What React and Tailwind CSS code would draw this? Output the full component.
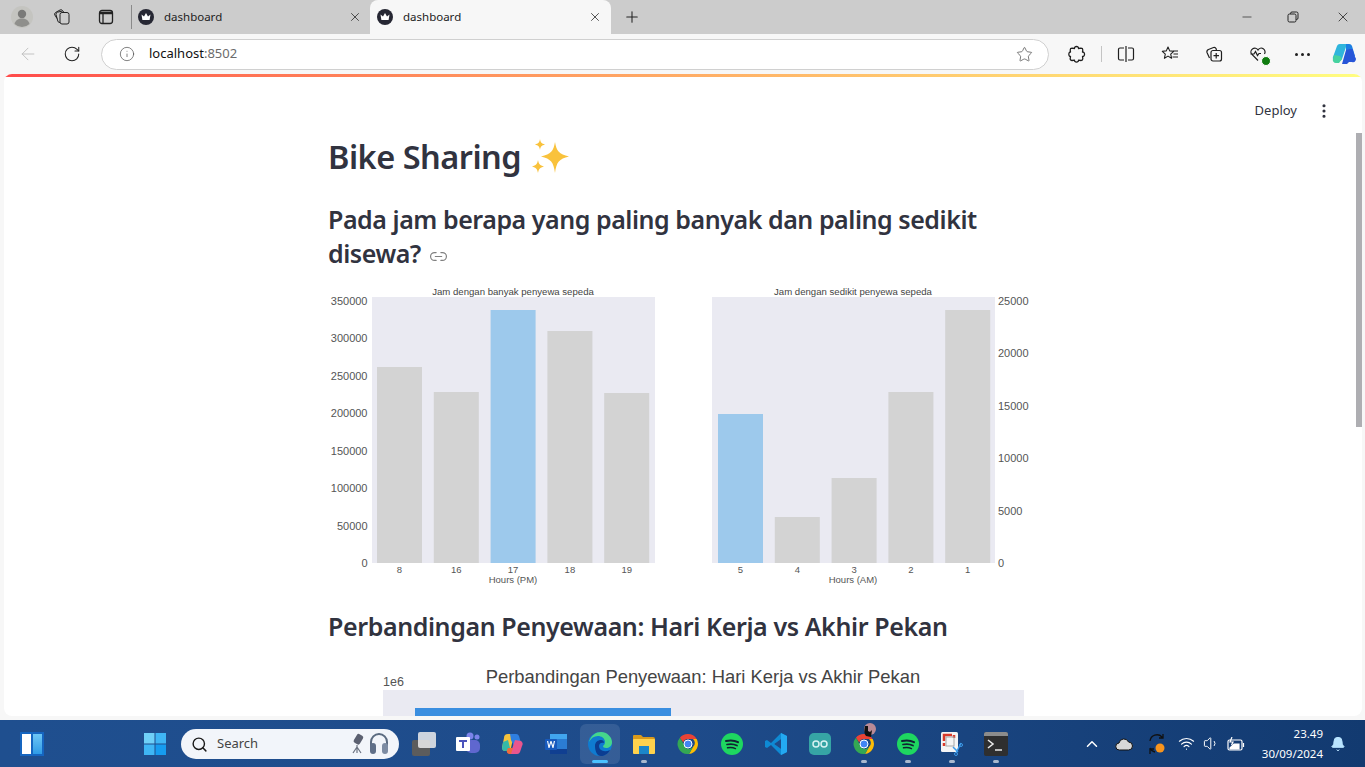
import React from 'react';
import { ArrowLeft, RotateCw, Info, Star, Plus, X, Minus, Link2, EllipsisVertical, Search, ChevronUp, Wifi, Volume1, Bell } from 'lucide-react';

const SANS = { fontFamily: '"Noto Sans", sans-serif' };

const CrownFavicon = () => (
    <svg width="16" height="16" viewBox="0 0 16 16">
        <circle cx="8" cy="8" r="8" fill="#262733" />
        <path d="M3.500 5.500l2.500 2L8 4l2 3.500 2.500-2-.9 5.500H4.400z" fill="#fff" />
    </svg>
);

const Tab = ({ active }) => (
    <div className={`h-[34px] flex items-center ${active ? 'w-[241px] bg-[#f7f7f7] rounded-t-lg pl-[7px] pr-[9px]' : 'w-[238px] pl-[6px] pr-[8px]'}`}>
        <CrownFavicon />
        <span className="ml-[10px] flex-1 text-[11.5px] text-[#222]" style={SANS}>dashboard</span>
        <X size={14} strokeWidth={1.3} className="text-[#222]" />
    </div>
);

const ToolIcon = ({ children, w = 'w-[44px]' }) => (
    <div className={`${w} shrink-0 flex justify-center items-center text-[#1f1f1f]`}>{children}</div>
);

const TopBars = () => (
    <>
        <div className="h-[34px] bg-[#cccccc] flex items-center shrink-0">
            <div className="w-[44px] flex justify-center">
                <svg width="22" height="22" viewBox="0 0 22 22">
                    <circle cx="11" cy="11" r="11" fill="#c4c4c0" />
                    <circle cx="11" cy="8" r="4.200" fill="#7a7a78" />
                    <path d="M3.500 18c1-4 4-5.500 7.500-5.500s6.500 1.500 7.500 5.500a11 11 0 0 1-15 0z" fill="#8f8f8c" />
                </svg>
            </div>
            <div className="w-[36px] flex justify-center">
                <svg width="18" height="18" viewBox="0 0 18 18" fill="none" stroke="#222" strokeWidth="1">
                    <rect x="7" y="4.500" width="9" height="11.500" rx="2" />
                    <path d="M7 14.500A2 2 0 0 1 4.800 13L3 6.500A2 2 0 0 1 4.500 4.200L9.500 3" />
                    <path d="M4 10.500L1.800 7A2 2 0 0 1 2.500 4.500L7 2a2 2 0 0 1 2.500.5L11 4.500" />
                </svg>
            </div>
            <div className="w-[51px] flex justify-center">
                <svg width="16" height="16" viewBox="0 0 16 16" fill="none" stroke="#222" strokeWidth="1.300">
                    <rect x="1.500" y="1.500" width="13" height="13" rx="2.500" />
                    <path d="M1.500 4h13" strokeWidth="2.500" />
                    <path d="M5 4.500v10" />
                </svg>
            </div>
            <div className="w-px h-[24px] bg-[#8a8a8a]" />
            <Tab />
            <Tab active />
            <Plus size={18} strokeWidth={1.4} className="ml-[12px] text-[#222]" />
            <div className="ml-auto flex items-center text-[#222]">
                <Minus size={14} strokeWidth={1.2} className="mr-[33px]" />
                <svg width="12" height="12" viewBox="0 0 12 12" fill="none" stroke="#222" strokeWidth="1" className="mr-[36px]">
                    <rect x="1" y="3" width="8" height="8" rx="1.500" />
                    <path d="M3.500 3V2.500A1.500 1.500 0 0 1 5 1h4.500A1.500 1.500 0 0 1 11 2.500V7A1.500 1.500 0 0 1 9.500 8.500H9" />
                </svg>
                <X size={16} strokeWidth={1.2} className="mr-[14px]" />
            </div>
        </div>
        <div className="h-[40px] bg-[#f7f7f7] flex items-center shrink-0">
            <ArrowLeft size={20} strokeWidth={1.1} className="ml-[18px] text-[#bdbdbd]" />
            <RotateCw size={18} strokeWidth={1.4} className="ml-[25px] text-[#222]" />
            <div className="ml-[20px] w-[948px] shrink-0 h-[31px] rounded-full bg-white border border-[#d0d0d0] flex items-center pl-[17px] pr-[15px]">
                <Info size={16} strokeWidth={1} className="text-[#444]" />
                <span className="ml-[14px] flex-1 text-[13px] text-[#111]" style={SANS}>localhost<span className="text-[#6b6b6b]">:8502</span></span>
                <Star size={17} strokeWidth={1.1} className="text-[#555]" />
            </div>
            <div className="ml-[6px] flex items-center">
                <ToolIcon>
                    <svg width="18" height="18" viewBox="0 0 18 18" fill="none" stroke="#1f1f1f" strokeWidth="1.300" strokeLinejoin="round">
                        <path d="M6.500 3.500C6 .8 11 .8 10.500 3.500L13 3.200c1 0 1.800.8 1.800 1.800L14.500 7c2.700-.3 2.700 4.800 0 4.500l.3 2.200c0 1-.8 1.800-1.800 1.800l-2.500-.3c.5 2.500-4.500 2.500-4 0L4 15.500c-1 0-1.800-.8-1.800-1.800l.3-2.200c-2.200.2-2.200-4.700 0-4.500L2.200 5c0-1 .8-1.800 1.800-1.800z" />
                    </svg>
                </ToolIcon>
                <div className="ml-[2px] w-px h-[16px] bg-[#c4c4c4]" />
                <ToolIcon w="w-[48px]">
                    <svg width="18" height="18" viewBox="0 0 18 18" fill="none" stroke="#1f1f1f" strokeWidth="1.200">
                        <path d="M7 3H3a1.500 1.500 0 0 0-1.500 1.500v9A1.500 1.500 0 0 0 3 15h4M11 3h4a1.500 1.500 0 0 1 1.500 1.500v9A1.500 1.500 0 0 1 15 15h-4M9 1v16" />
                    </svg>
                </ToolIcon>
                <ToolIcon w="w-[40px]">
                    <svg width="18" height="18" viewBox="0 0 18 18" fill="none" stroke="#1f1f1f" strokeWidth="1.100" strokeLinejoin="round">
                        <path d="M7 2l1.700 3.900 4 .4-3 2.800.9 4.200L7 11.100l-3.600 2.200.9-4.200-3-2.800 4-.4zM12 6h5M12.500 9H17M11.500 12H17" />
                    </svg>
                </ToolIcon>
                <ToolIcon w="w-[48px]">
                    <svg width="18" height="18" viewBox="0 0 18 18" fill="none" stroke="#1f1f1f" strokeWidth="1.200">
                        <rect x="6" y="5.500" width="10.500" height="10.500" rx="2" />
                        <path d="M11.200 8v5.500M8.500 10.700H14M4.500 13L2 7.500A2.500 2.500 0 0 1 3.500 4.500L8.500 2.500a2 2 0 0 1 2.500 1L11.500 5" />
                    </svg>
                </ToolIcon>
                <ToolIcon w="w-[40px]">
                    <div className="relative w-[18px] h-[18px]">
                        <svg width="18" height="18" viewBox="0 0 18 18" fill="none" stroke="#1f1f1f" strokeWidth="1.200">
                            <path d="M9 15.500L2.500 9A3.700 3.700 0 0 1 9 5a3.700 3.700 0 0 1 6.500 4M1.500 9h3.500l1.500-2.500 2 4 1.500-2h2" />
                        </svg>
                        <div className="absolute right-[-4px] bottom-[-3px] w-[10px] h-[10px] rounded-full bg-[#107c10] border border-white" />
                    </div>
                </ToolIcon>
                <ToolIcon w="w-[48px]">
                    <div className="flex gap-[3px]">
                        <div className="w-[3px] h-[3px] rounded-full bg-[#1f1f1f]" />
                        <div className="w-[3px] h-[3px] rounded-full bg-[#1f1f1f]" />
                        <div className="w-[3px] h-[3px] rounded-full bg-[#1f1f1f]" />
                    </div>
                </ToolIcon>
                <ToolIcon w="w-[36px]">
                    <svg width="24" height="24" viewBox="0 0 24 24">
                        <path d="M8 2h7L10 17a3 3 0 0 1-3 2H4a3 3 0 0 1-3-4l4-11a3 3 0 0 1 3-2z" fill="#2fb5dc" />
                        <path d="M2 13l6 1 2 3-3 4H4a3 3 0 0 1-3-4z" fill="#46d2a0" />
                        <path d="M14 2h3a3 3 0 0 1 3 2l3 10-3 5-6-8z" fill="#1c7fe3" />
                        <path d="M18 7h2.500L23 15a3 3 0 0 1-3 5h-3l-2 2h-5l4-14z" fill="#2755d8" />
                    </svg>
                </ToolIcon>
            </div>
        </div>
    </>
);

const GREY = '#d3d3d3';
const BLUE = '#9dc9ec';
const TICK = '#555555';

const BarPanel = ({ x, inset, bars, labels, title, xlabel, highlight }) => (
    <g>
        <rect x={x} y="12" width="283" height="266" fill="#eaeaf2" />
        {bars.map((top, i) => (
            <rect key={i} x={x + inset + i * 56.800} y={top - 285} width="45" height={563 - top} fill={i === highlight ? BLUE : GREY} />
        ))}
        {labels.map((l, i) => (
            <text key={l} x={x + inset + 22.500 + i * 56.800} y="288" fontSize="9.500" fill={TICK} textAnchor="middle">{l}</text>
        ))}
        <text x={x + 141} y="10" fontSize="9.600" fill="#444" textAnchor="middle">{title}</text>
        <text x={x + 141} y="298" fontSize="9.500" fill={TICK} textAnchor="middle">{xlabel}</text>
    </g>
);

// both bar plots share one picture, viewBox x stays in page coordinates
const HourCharts = () => (
    <svg width="710" height="305" viewBox="329 0 710 305" className="block" style={{ fontFamily: '"Liberation Sans", sans-serif' }}>
        <BarPanel x={372} inset={5} bars={[367, 392, 310, 331, 393]} labels={[8, 16, 17, 18, 19]} title="Jam dengan banyak penyewa sepeda" xlabel="Hours (PM)" highlight={2} />
        <BarPanel x={712} inset={6} bars={[414, 517, 478, 392, 310]} labels={[5, 4, 3, 2, 1]} title="Jam dengan sedikit penyewa sepeda" xlabel="Hours (AM)" highlight={0} />
        {[0, 50000, 100000, 150000, 200000, 250000, 300000, 350000].map((v, i) => (
            <text key={v} x="367.500" y={282 - i * 37.500} fontSize="11" fill={TICK} textAnchor="end">{v}</text>
        ))}
        {[0, 5000, 10000, 15000, 20000, 25000].map((v, i) => (
            <text key={v} x="998" y={282 - i * 52.400} fontSize="11" fill={TICK}>{v}</text>
        ))}
    </svg>
);

const CompareChart = () => (
    <svg width="710" height="80" viewBox="329 0 710 80" className="block" style={{ fontFamily: '"Liberation Sans", sans-serif' }}>
        <text x="703" y="23" fontSize="18.400" fill="#444" textAnchor="middle">Perbandingan Penyewaan: Hari Kerja vs Akhir Pekan</text>
        <text x="383" y="26" fontSize="12.500" fill={TICK}>1e6</text>
        <rect x="383" y="30" width="641" height="50" fill="#eaeaf2" />
        <rect x="415" y="48" width="256" height="32" fill="#3a8ee0" />
    </svg>
);

const Sparkles = () => (
    <svg width="40" height="40" viewBox="0 0 40 40" className="ml-[10px]">
        <path d="M24 5c1.500 9 4 12 14 14.500C28 22 25.500 25 24 36c-1.500-11-4-14-14-16.500C20 17 22.500 14 24 5z" fill="#f9c23c" />
        <path d="M9 2c.6 3.500 1.500 4.500 5 5.500-3.500 1-4.400 2-5 5.500-.6-3.500-1.500-4.500-5-5.500 3.500-1 4.400-2 5-5.500z" fill="#f9c23c" />
        <path d="M7 23c.7 4 1.800 5.200 6 6.500-4.200 1.300-5.300 2.500-6 6.500-.7-4-1.800-5.200-6-6.500 4.200-1.300 5.300-2.500 6-6.500z" fill="#f9c23c" />
    </svg>
);

const Page = () => (
    <div className="relative flex-1 ml-[4px] mr-[3px] mb-[4px] rounded-lg bg-white overflow-hidden min-h-0">
        <div className="h-[3px] bg-gradient-to-r from-[#ff4b4b] to-[#fffd80]" />
        <div className="absolute top-[27px] right-[29px] flex items-center">
            <span className="text-[13px] text-[#31333f] mr-[18px]" style={SANS}>Deploy</span>
            <EllipsisVertical size={18} strokeWidth={2.2} className="text-[#31333f]" />
        </div>
        <div className="absolute right-0 top-[59px] w-[6px] h-[294px] bg-[#aeaeb2]" />
        <div className="pl-[324px] w-[1040px] text-[#31333f]" style={SANS}>
            <h1 className="flex items-center h-[46px] mt-[57px] text-[32.5px] font-semibold tracking-[-0.5px] leading-none">
                Bike Sharing
                <Sparkles />
            </h1>
            <h2 className="mt-[22px] w-[690px] text-[25px] font-semibold tracking-[-0.45px] leading-[34px]">
                Pada jam berapa yang paling banyak dan paling sedikit disewa?
                <Link2 size={19} strokeWidth={1.5} className="inline ml-[8px] text-[#808080]" />
            </h2>
            <div className="mt-[15px] ml-[1px]"><HourCharts /></div>
            <h2 className="mt-[16px] h-[40px] text-[25px] font-semibold tracking-[-0.4px] leading-[40px]">Perbandingan Penyewaan: Hari Kerja vs Akhir Pekan</h2>
            <div className="mt-[14px] ml-[1px]"><CompareChart /></div>
        </div>
    </div>
);

const TaskIcon = ({ children, dot, active }) => (
    <div className="relative w-[44px] h-[44px] flex items-center justify-center">
        {active && <div className="absolute inset-x-[2px] inset-y-[2px] bg-white/10 rounded-md" />}
        <div className="relative flex">{children}</div>
        {dot && <div className={`absolute bottom-[3px] h-[3px] rounded-full ${active ? 'w-[16px] bg-[#4cc2ff]' : 'w-[6px] bg-[#a9b9cf]'}`} />}
    </div>
);

const Chrome = () => (
    <svg width="24" height="24" viewBox="0 0 48 48">
        <path d="M24 4a20 20 0 0 1 17.300 10H24a10 10 0 0 0-9.500 6.900L7.800 11.400A20 20 0 0 1 24 4z" fill="#ea4335" />
        <path d="M41.300 14A20 20 0 0 1 26 43.900l8.600-14.900A10 10 0 0 0 34 14z" fill="#fbbc05" />
        <path d="M26 43.900A20 20 0 0 1 7.800 11.400l8.600 14.900A10 10 0 0 0 34.600 29z" fill="#34a853" />
        <circle cx="24" cy="24" r="8" fill="#4285f4" stroke="#fff" strokeWidth="2" />
    </svg>
);

const Spotify = () => (
    <svg width="22" height="22" viewBox="0 0 22 22" fill="none" stroke="#123" strokeLinecap="round">
        <circle cx="11" cy="11" r="11" fill="#1ed760" stroke="none" />
        <path d="M5 8c4-1 8-1 12 1.200" strokeWidth="2" />
        <path d="M6 11.500c3.500-.8 7-.5 10 1" strokeWidth="1.700" />
        <path d="M6.500 14.800c3-.6 5.500-.4 8 .8" strokeWidth="1.400" />
    </svg>
);

const Taskbar = () => (
    <div className="h-[47px] shrink-0 flex items-center text-white bg-gradient-to-r from-[#1f4f8f] via-[#1e4b8a] to-[#123a70]">
        <div className="ml-[20px] w-[24px] h-[24px] bg-[#1565c0] flex p-[2px] gap-[2px]">
            <div className="w-[9px] bg-white" />
            <div className="flex-1 bg-gradient-to-b from-[#6cc6f5] to-[#2e9be6]" />
        </div>
        <svg width="24" height="24" viewBox="0 0 24 24" className="ml-[99px]">
            <rect x="1" y="1" width="10.500" height="10.500" fill="#6fd0f7" />
            <rect x="12.500" y="1" width="10.500" height="10.500" fill="#3fb6f5" />
            <rect x="1" y="12.500" width="10.500" height="10.500" fill="#3fb6f5" />
            <rect x="12.500" y="12.500" width="10.500" height="10.500" fill="#169cf0" />
        </svg>
        <div className="ml-[14px] mt-[1px] w-[218px] h-[30px] rounded-full bg-[#f2f5fa] flex items-center pl-[10px] pr-[8px] text-[#444]">
            <Search size={17} strokeWidth={2} className="text-[#1a1a1a]" />
            <span className="ml-[9px] flex-1 text-[13px]" style={SANS}>Search</span>
            <svg width="44" height="26" viewBox="0 0 44 26" fill="none">
                <path d="M6 22l4-6 4 6M10 14v8" stroke="#6b7280" strokeWidth="1.200" />
                <rect x="8" y="3" width="7" height="10" rx="2" fill="#5b6070" transform="rotate(30 11 8)" />
                <path d="M24 16v-5a8 8 0 0 1 16 0v5" stroke="#5b6b80" strokeWidth="2" />
                <rect x="23" y="12" width="6" height="11" rx="3" fill="#5f6f88" />
                <rect x="35" y="12" width="6" height="11" rx="3" fill="#7d8ca3" />
            </svg>
        </div>
        <div className="ml-[3px] flex items-center">
            <TaskIcon>
                <div className="relative w-[24px] h-[24px]">
                    <div className="absolute left-0 bottom-0 w-[18px] h-[16px] bg-[#5c5c5c] rounded-[2px]" />
                    <div className="absolute right-0 top-0 w-[18px] h-[16px] bg-[#ececec]/85 rounded-[2px]" />
                </div>
            </TaskIcon>
            <TaskIcon>
                <svg width="26" height="24" viewBox="0 0 26 24">
                    <circle cx="22" cy="5" r="2.500" fill="#7b83eb" />
                    <circle cx="15" cy="4" r="3.500" fill="#7b83eb" />
                    <rect x="11" y="8" width="14" height="13" rx="5" fill="#5f67cf" />
                    <rect x="1" y="5" width="14" height="14" rx="1" fill="#fff" />
                    <path d="M4 8h8v2H9v6H7v-6H4z" fill="#4b53bc" />
                </svg>
            </TaskIcon>
            <TaskIcon>
                <svg width="24" height="24" viewBox="0 0 24 24">
                    <path d="M8 2h6l-3 14a4 4 0 0 1-4 3H6a3.500 3.500 0 0 1-4-3.500L4 6a4 4 0 0 1 4-4z" fill="#f6c23c" />
                    <path d="M3 10l5-2 2 8-3 3H5a3 3 0 0 1-3-3z" fill="#35b8a8" />
                    <path d="M10 2h6a3 3 0 0 1 3 2l2 7-7 3-3-6z" fill="#2f7fe0" />
                    <path d="M15 8l6 1a3.500 3.500 0 0 1 1 5l-2 6a3 3 0 0 1-3 2H9l3-5z" fill="#e9568e" />
                    <path d="M8 16h5l-2 6H9a3 3 0 0 1-2-4z" fill="#ef6b3b" />
                </svg>
            </TaskIcon>
            <TaskIcon>
                <svg width="24" height="24" viewBox="0 0 24 24">
                    <rect x="6" y="2" width="17" height="20" rx="1.500" fill="#2b7cd3" />
                    <rect x="6" y="2" width="17" height="5" fill="#41a5ee" />
                    <rect x="6" y="17" width="17" height="5" fill="#103f91" />
                    <rect x="1" y="7" width="12" height="11" rx="1" fill="#185abd" />
                    <path d="M3 9l1.500 7h1L7 11l1.500 5h1L11 9h-1.200l-.8 4.500L7.500 9h-1L5 13.500 4.200 9z" fill="#fff" />
                </svg>
            </TaskIcon>
            <TaskIcon active dot>
                <svg width="26" height="26" viewBox="0 0 26 26">
                    <circle cx="13" cy="13" r="12" fill="#0f7bd0" />
                    <path d="M2 11C4 4 9 1 14 1c6 0 11 5 11 10 0 4-3 6-6 6-2 0-3-1-3-2 1-1 2-2 2-4 0-4-4-6-7-6-4 0-7 2-9 6z" fill="#46d68b" />
                    <path d="M8 15c0-4 3-6 6-6 2 0 3 1 3 3-2-1-5 0-5 3 0 4 5 7 11 4-2 4-6 6-9 6-4 0-6-5-6-10z" fill="#0b3d91" />
                </svg>
            </TaskIcon>
            <TaskIcon dot>
                <svg width="24" height="22" viewBox="0 0 24 22">
                    <path d="M1 3a1 1 0 0 1 1-1h7l2 2h10a2 2 0 0 1 2 2v3H1z" fill="#d99a1c" />
                    <rect x="1" y="6" width="22" height="15" rx="1" fill="#ffd24d" />
                    <rect x="7" y="13" width="10" height="8" fill="#1b86c9" />
                </svg>
            </TaskIcon>
            <TaskIcon><Chrome /></TaskIcon>
            <TaskIcon><Spotify /></TaskIcon>
            <TaskIcon>
                <svg width="24" height="24" viewBox="0 0 24 24">
                    <path d="M17 1l6 3v16l-6 3L7 13l-4 3-2-1V9l2-1 4 3z" fill="#0e8ad4" />
                    <path d="M17 1l6 3v16l-6 3zM17 7l-7 5 7 5z" fill="#23a9f2" />
                    <path d="M17 7v10l-7-5z" fill="#1e4b8a" />
                </svg>
            </TaskIcon>
            <TaskIcon>
                <div className="w-[22px] h-[22px] rounded-[5px] bg-[#36a5a5] flex items-center justify-center">
                    <svg width="16" height="8" viewBox="0 0 16 8" fill="none" stroke="#d6f2f2" strokeWidth="1.500">
                        <circle cx="4" cy="4" r="3" />
                        <circle cx="12" cy="4" r="3" />
                    </svg>
                </div>
            </TaskIcon>
            <TaskIcon dot>
                <div className="relative">
                    <Chrome />
                    <svg width="16" height="20" viewBox="0 0 16 20" className="absolute left-[8px] top-[-10px]">
                        <circle cx="10" cy="7" r="6" fill="#b98a96" />
                        <path d="M5 4c-1 4-1 8 1 10l5 1 1-7-2 2-2-1V4z" fill="#111" />
                    </svg>
                </div>
            </TaskIcon>
            <TaskIcon dot><Spotify /></TaskIcon>
            <TaskIcon dot>
                <svg width="26" height="26" viewBox="0 0 26 26" fill="none">
                    <rect x="2" y="1" width="17" height="20" rx="1.500" fill="#f5f5f5" />
                    <path d="M5 10V4h8M5 12v3M15 4v3" stroke="#d93a2b" strokeWidth="2.500" />
                    <rect x="7" y="6" width="8" height="9" stroke="#a8a8a8" strokeWidth="1" />
                    <path d="M14 16l5 5M22 12l-5 10" stroke="#3d9be9" strokeWidth="1.500" />
                    <circle cx="22" cy="14" r="1.500" stroke="#3d9be9" />
                    <circle cx="17" cy="23" r="1.500" stroke="#3d9be9" />
                </svg>
            </TaskIcon>
            <TaskIcon dot>
                <div className="w-[24px] h-[24px] rounded-[2px] bg-[#2f2f2f] overflow-hidden">
                    <div className="h-[4px] bg-[#8c8c8c]" />
                    <svg width="24" height="20" viewBox="0 0 24 20" fill="none" stroke="#e8e8e8" strokeWidth="1.600">
                        <path d="M4 4l5 4-5 4M11 14h7" />
                    </svg>
                </div>
            </TaskIcon>
        </div>
        <div className="ml-auto flex items-center">
            <ChevronUp size={18} strokeWidth={2} />
            <svg width="18" height="14" viewBox="0 0 18 14" className="ml-[14px]">
                <path d="M4.500 13a3.500 3.500 0 0 1-.5-7 5 5 0 0 1 9.500-1 4 4 0 0 1 0 8z" fill="#d8d8d8" stroke="#111" strokeWidth="1" />
            </svg>
            <svg width="20" height="22" viewBox="0 0 20 22" fill="none" stroke="#111" strokeWidth="1.300" className="ml-[14px]">
                <path d="M3 8a7 7 0 0 1 12-4l1 1M16 1v4h-4M3 15a7 7 0 0 0 5 4M3 21v-5h4" />
                <circle cx="13" cy="15" r="4.500" fill="#f7941d" stroke="none" />
            </svg>
            <Wifi size={17} strokeWidth={1.6} className="ml-[11px]" />
            <Volume1 size={17} strokeWidth={1.4} className="ml-[8px]" />
            <svg width="18" height="14" viewBox="0 0 18 14" fill="none" stroke="#fff" strokeWidth="1.200" className="ml-[7px]">
                <rect x="1" y="3" width="14" height="10" rx="1.500" />
                <path d="M16.500 6v4" />
                <path d="M3 11l4-4h5v5H3z" fill="#fff" />
                <path d="M5 0L3 5h3L4.500 8" />
            </svg>
            <div className="ml-[6px] w-[72px] text-right text-[11.500px] leading-[20px]" style={SANS}>
                <div>23.49</div>
                <div>30/09/2024</div>
            </div>
            <Bell size={16} strokeWidth={1.5} fill="#b9e4ff" className="ml-[7px] mr-[19px] text-[#b9e4ff]" />
        </div>
    </div>
);

export default function App() {
    return (
        <div className="w-[1365px] h-[767px] flex flex-col overflow-hidden bg-[#f7f7f7]">
            <TopBars />
            <Page />
            <Taskbar />
        </div>
    );
}
